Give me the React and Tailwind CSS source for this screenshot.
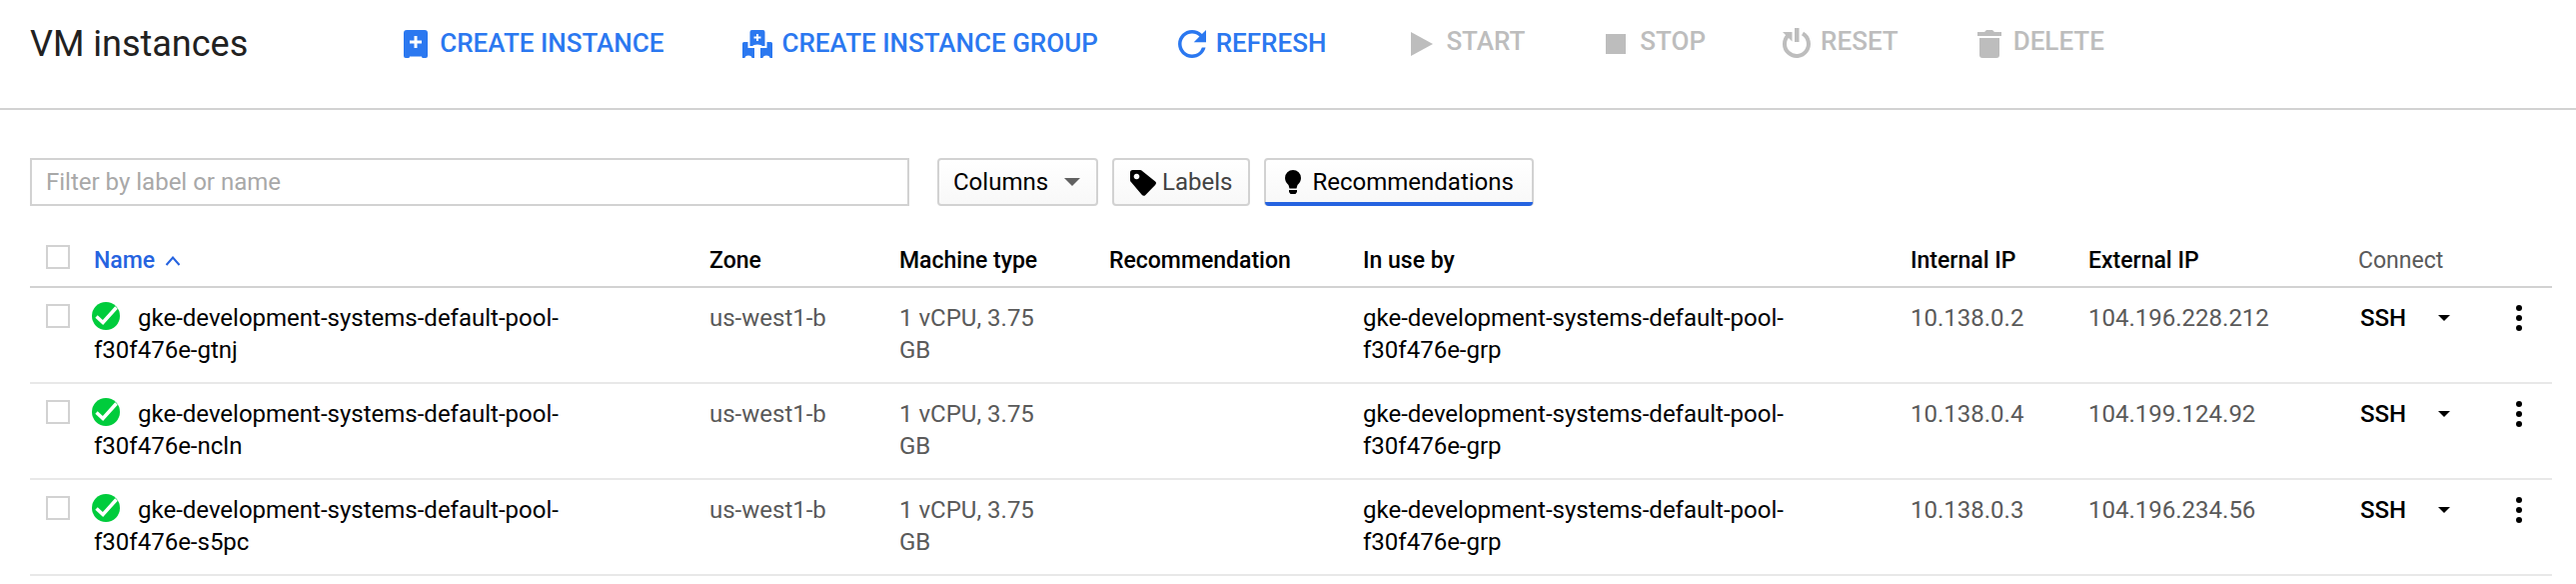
const PRIMARY_TOOLS = [
  { label: "CREATE INSTANCE", icon: InstanceIcon },
  { label: "CREATE INSTANCE GROUP", icon: GroupIcon },
  { label: "REFRESH", icon: RefreshIcon },
];

const SELECTION_TOOLS = [
  { label: "START", icon: StartIcon },
  { label: "STOP", icon: StopIcon },
  { label: "RESET", icon: ResetIcon },
  { label: "DELETE", icon: DeleteIcon },
];

const INSTANCES = [
  { name: "gke-development-systems-default-pool-f30f476e-gtnj", internal: "10.138.0.2", external: "104.196.228.212" },
  { name: "gke-development-systems-default-pool-f30f476e-ncln", internal: "10.138.0.4", external: "104.199.124.92" },
  { name: "gke-development-systems-default-pool-f30f476e-s5pc", internal: "10.138.0.3", external: "104.196.234.56" },
];

function ToolIcon({ children }) {
  return (
    <svg viewBox="0 0 36 36" className="size-9 shrink-0" fill="currentColor" aria-hidden="true">
      {children}
    </svg>
  );
}

function InstanceIcon() {
  return (
    <ToolIcon>
      <path
        fillRule="evenodd"
        d="M9 4h18a3 3 0 0 1 3 3v23a2 2 0 0 1-2 2h-2.500a1.500 1.500 0 0 1-1.500-1.500h-12a1.500 1.500 0 0 1-1.500 1.500h-2.500a2 2 0 0 1-2-2v-23a3 3 0 0 1 3-3zM16.500 10v4.500h-4.500v3h4.500v4.500h3v-4.500h4.500v-3h-4.500v-4.500z"
      />
    </ToolIcon>
  );
}

function GroupIcon() {
  return (
    <ToolIcon>
      <path
        fillRule="evenodd"
        d="M12.500 4h11a2 2 0 0 1 2 2v14h-3a4.500 1.500 0 0 0-9 0h-3v-14a2 2 0 0 1 2-2zM17 8v2.500h-2.500v2h2.500v2.500h2v-2.500h2.500v-2h-2.500v-2.500z"
      />
      <path d="M3 17.500a1.500 1.500 0 0 1 1.500-1.500h4v6h6.500v10h-2.500a3.500 2.500 0 0 0-7 0h-2.500z" />
      <path d="M33 17.500a1.500 1.500 0 0 0-1.500-1.500h-4v6h-6.500v10h2.500a3.500 2.500 0 0 1 7 0h2.500z" />
    </ToolIcon>
  );
}

function RefreshIcon() {
  return (
    <ToolIcon>
      <path d="M27.900 8.100A13.950 13.950 0 0 0 18 4C10.270 4 4.020 10.270 4.020 18S10.270 32 18 32c6.530 0 11.970-4.460 13.530-10.500h-3.640A10.490 10.490 0 0 1 18 28.500c-5.800 0-10.500-4.700-10.500-10.500S12.200 7.500 18 7.500c2.900 0 5.490 1.210 7.390 3.110L19.750 16.250H32V4z" />
    </ToolIcon>
  );
}

function StartIcon() {
  return (
    <ToolIcon>
      <path d="M7 6v24l22-12z" />
    </ToolIcon>
  );
}

function StopIcon() {
  return (
    <ToolIcon>
      <path d="M8 8h20v20h-20z" />
    </ToolIcon>
  );
}

function ResetIcon() {
  return (
    <ToolIcon>
      <path d="M16 2h4.500v14h-4.500z" />
      <path d="M4 6h9.500v9.500z" />
      <path d="M24 7.600A12 12 0 1 1 10 9" fill="none" stroke="currentColor" strokeWidth="4" />
    </ToolIcon>
  );
}

function DeleteIcon() {
  return (
    <ToolIcon>
      <path d="M6 6h7l2-2h6l2 2h7v4h-24z" />
      <path d="M8 12h20v17a3 3 0 0 1-3 3h-14a3 3 0 0 1-3-3z" />
    </ToolIcon>
  );
}

function Checkbox({ label }) {
  return (
    <input
      type="checkbox"
      aria-label={label}
      className="block size-6 appearance-none border-2 border-[#d2d2d2] bg-white checked:bg-[#2b78f0]"
    />
  );
}

function InstanceRow({ item }) {
  return (
    <tr className="border-b-2 border-[#e8e8e8] align-top text-[#5a5a5a]">
      <td className="pt-4 pl-4">
        <Checkbox label={"Select " + item.name} />
      </td>
      <td className="pt-3.5 pr-20 pb-4">
        <a href="#instance" className="text-black">
          <svg viewBox="0 0 28 28" className="mr-[18px] -ml-0.5 inline-block size-7 align-[-4px]" role="img" aria-label="Running">
            <circle cx="14" cy="14" r="14" fill="#00cc3c" />
            <path d="M4.500 14.500l6.500 6L24.500 5.500" fill="none" stroke="#fff" strokeWidth="3.500" />
          </svg>
          {item.name}
        </a>
      </td>
      <td className="pt-3.5 pr-10 pb-4">us-west1-b</td>
      <td className="pt-3.5 pr-10 pb-4">1 vCPU, 3.75 GB</td>
      <td />
      <td className="pt-3.5 pr-10 pb-4">
        <a href="#group" className="text-black">
          gke-development-systems-default-pool-f30f476e-grp
        </a>
      </td>
      <td className="pt-3.5 pb-4">{item.internal}</td>
      <td className="pt-3.5 pb-4">{item.external}</td>
      <td className="pt-3.5 pb-4 pl-0.5 text-black">
        <div className="flex items-center gap-8">
          <button type="button" className="font-medium">SSH</button>
          <button type="button" aria-label="SSH options" className="flex h-8 items-center">
            <svg viewBox="0 0 12 6" className="h-1.5 w-3" fill="currentColor" aria-hidden="true">
              <path d="M0 0h12l-6 6z" />
            </svg>
          </button>
        </div>
      </td>
      <td className="pt-3.5 pb-4 text-black">
        <button type="button" aria-label="More actions" className="flex size-8 items-center justify-center">
          <svg viewBox="0 0 6 26" className="h-[26px] w-1.5" fill="currentColor" aria-hidden="true">
            <circle cx="3" cy="3" r="3" />
            <circle cx="3" cy="13" r="3" />
            <circle cx="3" cy="23" r="3" />
          </svg>
        </button>
      </td>
    </tr>
  );
}

export default function App() {
  return (
    <div className="min-h-screen bg-white font-[Roboto,sans-serif] text-2xl leading-8 text-black">
      <header className="flex h-[110px] items-center border-b-2 border-[#d2d2d2] px-[30px] pb-5">
        <h1 className="mr-[150px] text-4xl whitespace-nowrap text-[#212121]">VM instances</h1>
        <div role="toolbar" aria-label="Instance actions" className="flex items-center gap-[78px] text-[26px] leading-8 font-medium whitespace-nowrap">
          <div className="flex items-center gap-[76px] text-[#2b78f0]">
            {PRIMARY_TOOLS.map(({ label, icon: Icon }) => (
              <button key={label} type="button" className="flex items-center gap-1.5">
                <Icon />
                <span className="pb-0.5">{label}</span>
              </button>
            ))}
          </div>
          <div className="flex items-center gap-[73px] text-[#bdbdbd]">
            {SELECTION_TOOLS.map(({ label, icon: Icon }) => (
              <button key={label} type="button" disabled className="flex items-center gap-1.5">
                <Icon />
                <span className="pb-1.5">{label}</span>
              </button>
            ))}
          </div>
        </div>
      </header>

      <main className="pt-12 pr-6 pl-[30px]">
        <div className="flex h-12 items-stretch">
          <input
            type="text"
            aria-label="Filter by label or name"
            placeholder="Filter by label or name"
            className="w-[880px] min-w-0 border-2 border-[#d2d2d2] px-3.5 placeholder:text-[#a8a8a8]"
          />
          <div className="ml-7 flex gap-3.5">
            <button
              type="button"
              className="flex items-center gap-4 rounded-sm border-2 border-[#d2d2d2] bg-linear-to-b from-white to-[#f8f8f8] px-4 pl-3.5"
            >
              Columns
              <svg viewBox="0 0 16 8" className="h-2 w-4" fill="#616161" aria-hidden="true">
                <path d="M0 0h16l-8 8z" />
              </svg>
            </button>
            <button
              type="button"
              className="flex items-center gap-1.5 rounded-sm border-2 border-[#d2d2d2] bg-linear-to-b from-white to-[#f8f8f8] pr-4 pl-3.5 text-[#424242]"
            >
              <svg viewBox="0 0 28 28" className="size-7" fill="#000" aria-hidden="true">
                <path
                  fillRule="evenodd"
                  d="M4.500 2h7.500a3 3 0 0 1 2.100.900l12.800 10.300a2.500 2.500 0 0 1 .2 3.700l-9.700 10a2.500 2.500 0 0 1-3.700-.2l-10.800-12.600a3 3 0 0 1-.9-2.100v-7.500a2.500 2.500 0 0 1 2.500-2.500zM8.500 5.700a2.800 2.800 0 1 0 .01 0z"
                />
              </svg>
              Labels
            </button>
            <button
              type="button"
              aria-pressed="true"
              className="relative flex items-center gap-2.5 rounded-sm border-2 border-[#d2d2d2] bg-linear-to-b from-white to-[#f8f8f8] px-[18px]"
            >
              <svg viewBox="0 0 18 24" className="h-6 w-[18px]" fill="#000" aria-hidden="true">
                <path d="M9 0a8 8 0 0 1 8 8c0 3-1.500 5-3.500 7l-1 3.500h-7l-1-3.500c-2-2-3.500-4-3.500-7a8 8 0 0 1 8-8z" />
                <path d="M5 20h8v2l-1.500 2h-5l-1.500-2z" />
              </svg>
              Recommendations
              <span className="absolute -inset-x-px -bottom-0.5 h-1 rounded-b-sm bg-[#2563e0]" />
            </button>
          </div>
        </div>

        <table className="mt-[21px] w-full table-fixed border-collapse text-left">
          <colgroup>
            <col className="w-16" />
            <col />
            <col className="w-[190px]" />
            <col className="w-[210px]" />
            <col className="w-[254px]" />
            <col className="w-[548px]" />
            <col className="w-[178px]" />
            <col className="w-[270px]" />
            <col className="w-[145px]" />
            <col className="w-[49px]" />
          </colgroup>
          <thead className="text-[23px] leading-8">
            <tr className="h-[60px] border-b-2 border-[#d2d2d2]">
              <th className="pl-4">
                <Checkbox label="Select all instances" />
              </th>
              <th className="pt-2 font-medium" aria-sort="ascending">
                <button type="button" className="flex items-center gap-2.5 text-[#2563e0]">
                  Name
                  <svg viewBox="0 0 16 10" className="h-2.5 w-4" fill="none" stroke="currentColor" strokeWidth="2" aria-hidden="true">
                    <path d="M1.500 9l6.500-7.500l6.500 7.500" />
                  </svg>
                </button>
              </th>
              <th className="pt-2 font-medium">Zone</th>
              <th className="pt-2 font-medium">Machine type</th>
              <th className="pt-2 font-medium">Recommendation</th>
              <th className="pt-2 font-medium">In use by</th>
              <th className="pt-2 font-medium">Internal IP</th>
              <th className="pt-2 font-medium">External IP</th>
              <th className="pt-2 font-normal text-[#5a5a5a]">Connect</th>
              <td />
            </tr>
          </thead>
          <tbody>
            {INSTANCES.map((i) => (
              <InstanceRow key={i.name} item={i} />
            ))}
          </tbody>
        </table>
      </main>
    </div>
  );
}
